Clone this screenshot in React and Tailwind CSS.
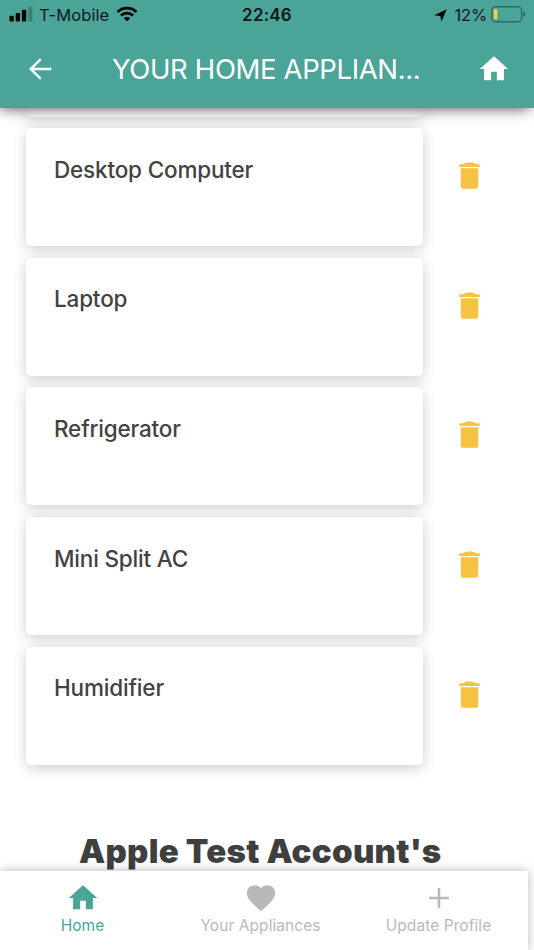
const HOME = 'M10 20v-6h4v6h5v-8h3L12 3 2 12h3v8z';
const BACK = 'M20 11.150H7.600l5.500-5.500L12 4.400l-7.800 7.600 7.800 7.600 1.100-1.250L7.600 12.850H20z';
const TRASH =
  'M19 4.200h-2.800q-1.200-1.200-2.500-1.200h-3.400q-1.300 0-2.500 1.200H5v2h14zM6 19.500A1.500 1.500 0 0 0 7.500 21h9A1.500 1.500 0 0 0 18 19.500V7H6z';
const HEART =
  'M12 21.350l-1.450-1.320C5.400 15.360 2 12.280 2 8.500 2 5.420 4.420 3 7.500 3c1.740 0 3.410.810 4.500 2.090C13.090 3.810 14.760 3 16.500 3 19.580 3 22 5.420 22 8.500c0 3.780-3.400 6.860-8.550 11.540z';
const PLUS = 'M19 12.900h-6.100v6.100h-1.800v-6.100H5v-1.800h6.100V5h1.800v6.100H19z';

const appliances = ['Desktop Computer', 'Laptop', 'Refrigerator', 'Mini Split AC', 'Humidifier'];

const tabs = [
  { label: 'Home', icon: HOME, color: 'text-[#4ba498]' },
  { label: 'Your Appliances', icon: HEART, color: 'text-[#b9b9b9]' },
  { label: 'Update Profile', icon: PLUS, color: 'text-[#b9b9b9]' },
];

function Icon({ d, className }) {
  return (
    <svg viewBox="0 0 24 24" fill="currentColor" className={`block shrink-0 ${className}`}>
      <path d={d} />
    </svg>
  );
}

function StatusBar() {
  return (
    <div className="grid h-[30px] grid-cols-3 items-center text-[#0b1a18]">
      <div className="flex items-center pl-[9px]">
        <svg viewBox="0 0 24 16" className="-mt-[2px] h-4 w-6">
          <rect x="0.500" y="9.800" width="4.300" height="5.700" rx="1" fill="#000" />
          <rect x="6.700" y="7" width="4.300" height="8.500" rx="1" fill="#000" />
          <rect x="12.900" y="3.800" width="4.300" height="11.700" rx="1" fill="#000" />
          <rect x="19.200" y="0.700" width="4.300" height="14.800" rx="1" fill="#3a8177" />
        </svg>
        <span className="ml-[6px] text-[16.500px] leading-none tracking-[0.100px] whitespace-nowrap">T-Mobile</span>
        <svg viewBox="0 0 22 16" className="-mt-[2px] ml-[6.500px] h-4 w-[22px]" fill="none" stroke="#000" strokeWidth="2.800">
          <path d="M1.500 5.900a13.600 13.600 0 0 1 19 0" />
          <path d="M5 9.600a8.600 8.600 0 0 1 12 0" />
          <path d="M11 15.500l-3.200-3.200a4.600 4.600 0 0 1 6.400 0z" fill="#000" stroke="none" />
        </svg>
      </div>
      <div className="text-center text-[17px] leading-none font-semibold tracking-[0.200px]">22:46</div>
      <div className="flex items-center justify-end pr-[8px]">
        <svg viewBox="0 0 13 13" className="h-[13px] w-[13px]" fill="#000">
          <path d="M12.800.200L7.300 12.800 6.400 6.900.200 6.200z" />
        </svg>
        <span className="ml-2 text-[16.500px] leading-none tracking-[-0.200px]">12%</span>
        <svg viewBox="0 0 35 17" className="-mt-[2px] ml-1 h-[17px] w-[35px]">
          <rect x="0.750" y="0.750" width="30" height="15" rx="4" fill="none" stroke="#2f6860" strokeWidth="1.300" />
          <rect x="2.800" y="3" width="3.500" height="10.500" rx="1.500" fill="#fdd03b" />
          <path d="M32.300 5.500q2 1 2 2.800t-2 2.800z" fill="#2f6860" />
        </svg>
      </div>
    </div>
  );
}

function Header() {
  return (
    <header className="relative z-10 h-[108.400px] shrink-0 bg-[#4ba498] shadow-[-2px_3px_13px_-2px_rgba(0,0,0,0.65)]">
      <StatusBar />
      <div className="flex h-[78px] items-center pr-[23px] pl-[23px] text-white">
        <Icon d={BACK} className="h-[34px] w-[34px]" />
        <h1 className="ml-[55px] flex-1 pt-[2px] text-[27.500px] leading-none font-normal tracking-[-0.370px] whitespace-nowrap">
          YOUR HOME APPLIAN...
        </h1>
        <Icon d={HOME} className="h-[34px] w-[34px]" />
      </div>
    </header>
  );
}

function ApplianceRow({ name }) {
  return (
    <li className="flex h-[118px] items-start">
      <div className="h-full w-[397px] rounded-[5px] bg-white pt-[26.500px] pl-[28px] shadow-[0_3px_14px_rgba(0,0,0,0.2)]">
        <p className="text-[22.500px] leading-[30px] font-medium tracking-[-0.180px] text-[#424242]">{name}</p>
      </div>
      <Icon d={TRASH} className="mt-[30px] ml-[29px] h-[35px] w-[35px] text-[#f5c242]" />
    </li>
  );
}

export default function App() {
  return (
    <div className="relative flex h-[950px] w-[534px] flex-col overflow-hidden bg-white font-['Inter',sans-serif]">
      <Header />
      <main className="min-h-0 flex-1 overflow-hidden pl-[26px]">
        <div className="h-[8.500px] w-[397px] rounded-b-[5px] bg-white shadow-[0_3px_14px_rgba(0,0,0,0.2)]" />
        <ul className="mt-[11.500px] flex flex-col gap-[11.550px]">
          {appliances.map((name) => (
            <ApplianceRow key={name} name={name} />
          ))}
        </ul>
        <h2 className="mt-[66.500px] pl-[53px] text-[33px] leading-[40px] font-black tracking-[0.280px] whitespace-nowrap text-[#3f3f3f]">
          Apple Test Account&apos;s
        </h2>
      </main>
      <nav className="relative z-10 h-[79.500px] w-[528px] shrink-0 bg-white shadow-[0_0_10px_rgba(0,0,0,0.28)]">
        <div className="-ml-[6.500px] flex w-[534px]">
          {tabs.map((tab) => (
            <div key={tab.label} className={`flex w-[178px] shrink-0 flex-col items-center pt-[10px] ${tab.color}`}>
              <Icon d={tab.icon} className="h-[34px] w-[34px]" />
              <span className="mt-[1px] text-[15.500px] leading-5 tracking-[0.070px] whitespace-nowrap">{tab.label}</span>
            </div>
          ))}
        </div>
      </nav>
    </div>
  );
}
